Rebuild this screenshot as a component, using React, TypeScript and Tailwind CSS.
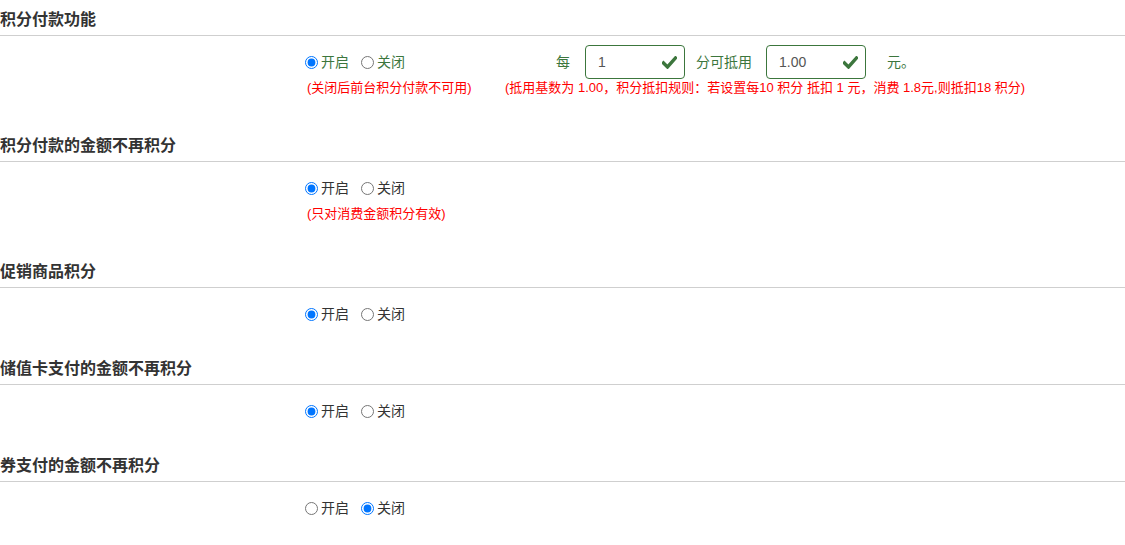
import { useState } from "react";

const FONT = "font-['Liberation_Sans','Noto_Sans_CJK_SC',sans-serif]";

type Opt = "on" | "off";

const OkIcon = () => (
  <svg width="15" height="13" viewBox="0 0 15 13" className="shrink-0">
    <path d="M1.5 7 L5.5 11 L13.5 2" fill="none" stroke="#3c763d" strokeWidth="3.4" strokeLinecap="square" />
  </svg>
);

const RadioPair = ({ name, value, onChange, green }: { name: string; value: Opt; onChange: (v: Opt) => void; green?: boolean }) => {
  const color = green ? "text-[#3c763d]" : "text-[#333]";
  return (
    <div className={`flex items-center text-[14px] ${color}`}>
      <label className="flex items-center gap-[3px] cursor-pointer">
        <input
          type="radio"
          name={name}
          checked={value === "on"}
          onChange={() => onChange("on")}
          className="m-0 w-[13px] h-[13px]"
        />
        <span>开启</span>
      </label>
      <label className="flex items-center gap-[3px] ml-[12px] cursor-pointer">
        <input
          type="radio"
          name={name}
          checked={value === "off"}
          onChange={() => onChange("off")}
          className="m-0 w-[13px] h-[13px]"
        />
        <span>关闭</span>
      </label>
    </div>
  );
};

const Section = ({ title, children }: { title: string; children: React.ReactNode }) => (
  <div className="pt-[9px]">
    <div className="h-[27px] border-b border-[#cfcfcf]">
      <h3 className="text-[16px] leading-[22px] font-bold text-[#333]">{title}</h3>
    </div>
    <div className="pl-[305px] mt-[9px]">{children}</div>
  </div>
);

const Note = ({ children, className = "" }: { children: React.ReactNode; className?: string }) => (
  <div className={`text-[13px] leading-[18px] text-[#ff0000] ${className}`}>{children}</div>
);

export default function App() {
  const [payOn, setPayOn] = useState<Opt>("on");
  const [noPoints, setNoPoints] = useState<Opt>("on");
  const [promo, setPromo] = useState<Opt>("on");
  const [card, setCard] = useState<Opt>("on");
  const [coupon, setCoupon] = useState<Opt>("off");
  const [pts, setPts] = useState("1");
  const [money, setMoney] = useState("1.00");

  return (
    <div className={`w-[1125px] min-h-[545px] bg-white ${FONT}`}>
      <Section title="积分付款功能">
        <div className="flex items-center h-[34px]">
          <div className="w-[202px]">
            <RadioPair name="pay" value={payOn} onChange={setPayOn} green />
          </div>
          <div className="flex items-center text-[14px] text-[#3c763d]">
            <span className="ml-[49px]">每</span>
            <div className="ml-[15px] w-[100px] h-[34px] border border-[#3c763d] rounded-[4px] flex items-center pl-[12px] pr-[7px]">
              <input
                value={pts}
                onChange={(e) => setPts(e.target.value)}
                className="flex-1 min-w-0 outline-none text-[14px] text-[#555]"
              />
              <OkIcon />
            </div>
            <span className="ml-[11px]">分可抵用</span>
            <div className="ml-[14px] w-[100px] h-[34px] border border-[#3c763d] rounded-[4px] flex items-center pl-[12px] pr-[7px]">
              <input
                value={money}
                onChange={(e) => setMoney(e.target.value)}
                className="flex-1 min-w-0 outline-none text-[14px] text-[#555]"
              />
              <OkIcon />
            </div>
            <span className="ml-[21px]">元。</span>
          </div>
        </div>
        <div className="flex mb-[29px]">
          <Note className="w-[200px] pl-[2px]">(关闭后前台积分付款不可用)</Note>
          <Note>(抵用基数为 1.00，积分抵扣规则：若设置每10 积分 抵扣 1 元，消费 1.8元,则抵扣18 积分)</Note>
        </div>
      </Section>

      <Section title="积分付款的金额不再积分">
        <div className="flex items-center h-[34px]">
          <RadioPair name="nopoints" value={noPoints} onChange={setNoPoints} />
        </div>
        <Note className="pl-[2px] mb-[29px]">(只对消费金额积分有效)</Note>
      </Section>

      <Section title="促销商品积分">
        <div className="flex items-center h-[34px] mb-[18px]">
          <RadioPair name="promo" value={promo} onChange={setPromo} />
        </div>
      </Section>

      <Section title="储值卡支付的金额不再积分">
        <div className="flex items-center h-[34px] mb-[18px]">
          <RadioPair name="card" value={card} onChange={setCard} />
        </div>
      </Section>

      <Section title="券支付的金额不再积分">
        <div className="flex items-center h-[34px] mb-[18px]">
          <RadioPair name="coupon" value={coupon} onChange={setCoupon} />
        </div>
      </Section>
    </div>
  );
}
